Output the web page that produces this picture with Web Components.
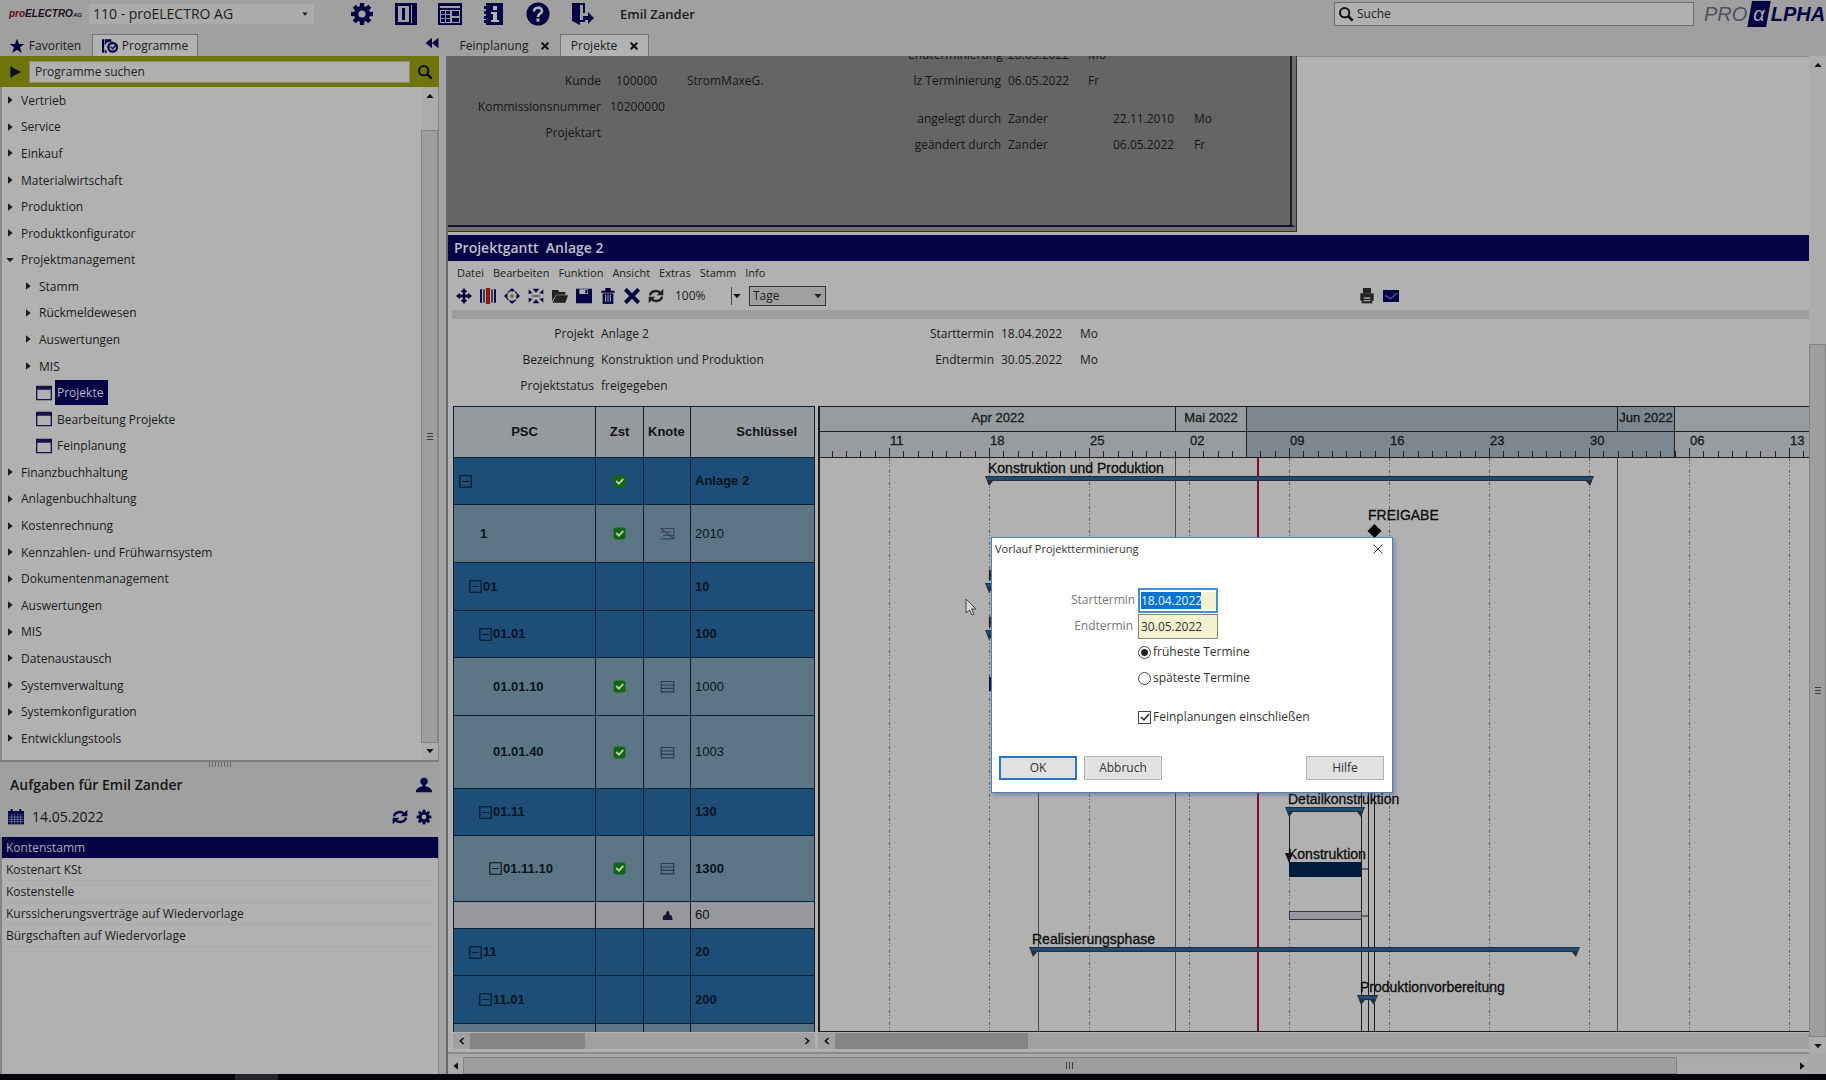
<!DOCTYPE html>
<html lang="de">
<head>
<meta charset="utf-8">
<title>proELECTRO AG – Projekte</title>
<style>
html,body{margin:0;height:100%}
body{font:12px/16px "Open Sans","Noto Sans",sans-serif;color:#1c1c1c;background:#a0a0a0;overflow:hidden}
</style>
</head>
<body>
<erp-app></erp-app>
<script>
const NAVY = '#050244';
const BASE = `*{box-sizing:border-box}button,input,select{font:inherit;color:inherit;margin:0;padding:0;border:0;background:none;border-radius:0;outline:0}button{display:flex;align-items:center;justify-content:center}a{color:inherit;text-decoration:none}`;

class Base extends HTMLElement {
  connectedCallback() {
    if (this.shadowRoot) return;
    const root = this.attachShadow({ mode: 'open' });
    const t = document.createElement('template');
    t.innerHTML = `<style>${BASE}${this.css()}</style>${this.html()}`;
    root.append(t.content.cloneNode(true));
  }
  css() { return ''; }
  html() { return '<slot></slot>'; }
}

/* ---------- icons ---------- */
const teeth = [0, 45, 90, 135].map(a => `<rect x="9.8" y="1" width="4.4" height="22" transform="rotate(${a} 12 12)"/>`).join('');
const ICONS = {
  gear: `${teeth}<circle cx="12" cy="12" r="8"/><circle cx="12" cy="12" r="3.6" fill="#a4a4a4"/>`,
  panel: `<path fill-rule="evenodd" d="M1 1h22v22H1zM4 4v16h11V4zM17 3v18h1V3z"/><path d="M8 6h3v12H8z"/>`,
  layout: `<path fill-rule="evenodd" d="M0 1h24v22H0zM2 4v2h20V4zM2 8v13h20V8z"/><path d="M3 9h9v11H3zM14 9h7v5h-7zM14 16h7v4h-7z"/><path d="M3 12.500h9M3 16.500h9M7.500 9v11" stroke="#8c8cae"/>`,
  info: `<path d="M4 1h17v22H4z"/><path d="M2 4h3v3H2zM2 9h3v3H2zM2 14h3v3H2zM2 18h3v3H2z"/><path fill="#b4b4b4" d="M11 4h4v4h-4zM9 10h6v8h2v2H9v-2h2v-6H9z"/>`,
  help: `<circle cx="12" cy="12" r="11.5"/><path d="M8 9.5c0-5 8-5 8-.6 0 3-4 2.600-4 6" fill="none" stroke="#b4b4b4" stroke-width="2.600"/><path fill="#b4b4b4" d="M10.500 16.500h3v3h-3z"/>`,
  exit: `<path d="M2 2h8v21l-8-4z"/><path d="M2 2h12v9M14 17v2H9" fill="none" stroke="currentColor" stroke-width="2"/><path d="M13 14h5v-4l6 6-6 6v-4h-5z"/>`,
  star: `<path d="M12 1l3 8h8l-6.500 5 2.500 8.500-7-5-7 5L7.500 14 1 9h8z"/>`,
  book: `<path d="M0 2h3v20H0zM4 2h10v4a8 8 0 0 0-7 14v2H4z"/><circle cx="16" cy="14" r="6.500" fill="none" stroke="currentColor" stroke-width="3.500"/><path d="M13 13l3 3 6-7" fill="none" stroke="currentColor" stroke-width="2"/>`,
  back: `<path d="M12 3v18L1 12zM23 3v18L12 12z"/>`,
  play: `<path d="M4 2l18 10L4 22z"/>`,
  search: `<circle cx="10" cy="10" r="7" fill="none" stroke="currentColor" stroke-width="3"/><path d="M15 15l7 7" stroke="currentColor" stroke-width="4"/>`,
  right: `<path d="M6 1l14 11L6 23z"/>`, left: `<path d="M18 1L4 12l14 11z"/>`,
  down: `<path d="M1 6l11 13L23 6z"/>`, up: `<path d="M1 18L12 5l11 13z"/>`,
  window: `<path fill-rule="evenodd" d="M0 1h24v22H0zM2 7v14h20V7z"/>`,
  person: `<circle cx="12" cy="6.500" r="5.500"/><path d="M10 10h4v4c5 1 10 3 10 9H0c0-6 5-8 10-9z"/>`,
  calendar: `<path d="M0 3h24v5H0zM4 0h3v4H4zM17 0h3v4h-3z"/><path d="M0 8h24v15H0z"/><path d="M5.500 9v13M10 9v13M14.500 9v13M19 9v13M1 12h22M1 15.500h22M1 19h22" stroke="#8c8cae" stroke-width="1"/>`,
  refresh: `<path d="M3 11c1-7 11-8 15-4M21 13c-1 7-11 8-15 4" fill="none" stroke="currentColor" stroke-width="3.600"/><path d="M23 1v10H13zM1 23V13h10z"/>`,
  move: `<path d="M12 0l5 6H7zM12 24l5-6H7zM0 12l6-5v10zM24 12l-6-5v10z"/><path d="M10 4h4v16h-4z"/><path d="M4 10h16v4H4z"/>`,
  bars: `<path d="M0 2h3v20H0zM21 2h3v20h-3zM5 2h2v20H5zM17 2h2v20h-2z"/><path d="M9 0h6v24H9z" fill="#8e1a12"/>`,
  expand: `<path d="M12 0l5 5H7zM12 24l5-5H7zM0 12l5-5v10zM24 12l-5-5v10z"/><circle cx="12" cy="12" r="8" fill="none" stroke="currentColor" stroke-width="2" stroke-dasharray="3 3"/><circle cx="12" cy="12" r="3" fill="#7d7d2a"/>`,
  shrink: `<path d="M7 1h10l-5 6zM7 23h10l-5-6zM1 2l6 6-6 1zM23 2l-6 6 6 1zM1 22l6-6-6-1zM23 22l-6-6 6-1z"/><path d="M6 11h12v2H6z" fill="#4b4b3a"/>`,
  folder: `<path d="M0 3h9l2 3h9v4H6L0 20z"/><path d="M6 11h18l-4 11H1z"/>`,
  save: `<path fill-rule="evenodd" d="M0 1h24v22H0zM5 2v7h13V2zM14 3h3v5h-3z"/>`,
  trash: `<path d="M2 4h20v3H2zM8 0h8v4H8z"/><path d="M4 8h16v16H4z"/><path d="M8.500 10v11M12 10v11M15.500 10v11" stroke="#a8a8bc" stroke-width="1.500"/>`,
  cross: `<path d="M2 2l20 20M22 2L2 22" stroke="currentColor" stroke-width="6"/>`,
  thin: `<path d="M3 3l18 18M21 3L3 21" stroke="currentColor" stroke-width="2"/>`,
  printer: `<path d="M6 0h12v8H6z"/><path d="M2 8h20v11H2z"/><path d="M4 13h16v10H4z"/><path d="M7 15h10M7 19h10" stroke="#a8a8a8" stroke-width="2"/>`,
  mail: `<path d="M0 3h24v18H0z"/><path d="M3 11l8 5 11-9" fill="none" stroke="#55558a" stroke-width="2"/>`,
  check: `<rect x="1" y="1" width="22" height="22" rx="5" fill="#126612"/><path d="M6 11l5 5 8-9" fill="none" stroke="#b8ccb0" stroke-width="3.600"/>`,
  lines: `<path d="M1 4h22M1 9.500h22M1 15h22M1 20.500h22M2 4v16M22 4v16" fill="none" stroke="#2c3c4c" stroke-width="1.800"/>`,
  event: `<path d="M1 4h22M1 9.500h17M5 15h17M1 20.500h22M1 4l21 16M22 4v16" fill="none" stroke="#3a4458" stroke-width="1.800"/>`,
  worker: `<path d="M12 2c5 0 4 6 4 8 4 1 7 4 7 12H2C1 14 4 11 9 10c0-3 0-8 3-8z" fill="#15153a"/>`,
  minus: `<path d="M1.500 1.500h21v21h-21zM6 12h12" fill="none" stroke="currentColor" stroke-width="2"/>`,
  chevl: `<path d="M17 3L7 12l10 9" fill="none" stroke="currentColor" stroke-width="5"/>`,
  chevr: `<path d="M7 3l10 9-10 9" fill="none" stroke="currentColor" stroke-width="5"/>`
};
customElements.define('app-icon', class extends Base {
  css() { const s = this.getAttribute('size') || 16; return `:host{display:inline-block;flex:none;width:${s}px;height:${s}px}svg{display:block;width:100%;height:100%}`; }
  html() { return `<svg viewBox="0 0 24 24" fill="currentColor" aria-hidden="true">${ICONS[this.getAttribute('name')] || ''}</svg>`; }
});

/* ---------- scroll bars ---------- */
customElements.define('scroll-bar', class extends Base {
  css() {
    const v = !this.hasAttribute('horizontal'), [a, b, c] = (this.getAttribute('parts') || '1 1 1').split(' ');
    return `:host{display:flex;flex:none;flex-direction:${v ? 'column' : 'row'};background:var(--track,#acacac);color:#151515}
    button{flex:none;width:var(--btn,17px);height:17px}
    ${v ? ':host{width:17px}' : ':host{height:17px}button{height:100%}'}
    .a{flex:${a} 0 0}.c{flex:${c} 0 0}
    .t{flex:${b} 0 0;background:var(--thumb,#9e9e9e);border:1px solid var(--edge,#838383);display:flex;align-items:center;justify-content:center}
    .g{${v ? 'width:6px;height:7px;background:repeating-linear-gradient(#3c3c3c 0 1px,transparent 1px 3px)' : 'height:7px;width:7px;background:repeating-linear-gradient(90deg,#3c3c3c 0 1px,transparent 1px 3px)'}}`;
  }
  html() {
    const v = !this.hasAttribute('horizontal'), ch = this.hasAttribute('chevron');
    const i = v ? ['up', 'down'] : ch ? ['chevl', 'chevr'] : ['left', 'right'];
    return `<button aria-label="zurück"><app-icon name="${i[0]}" size="8"></app-icon></button><div class="a"></div><div class="t">${ch ? '' : '<div class="g"></div>'}</div><div class="c"></div>${this.hasAttribute('open-end') ? '' : `<button aria-label="vor"><app-icon name="${i[1]}" size="8"></app-icon></button>`}`;
  }
});

/* ---------- header ---------- */
customElements.define('app-header', class extends Base {
  css() { return `:host{display:flex;align-items:center;height:28px;flex:none}
    .logo{width:84px;padding-left:9px;font:italic bold 10px/16px "Liberation Sans",sans-serif;color:#1c1020}.logo b{color:#5c1018}.logo small{font-size:6px}
    .client{display:flex;align-items:center;width:225px;height:20px;margin:0 36px 0 5px;padding-right:6px;background:#ababab}
    select{appearance:none;flex:1;font-size:14px;line-height:20px;height:20px;padding-left:4px}
    .tools{display:flex;gap:20px;color:${NAVY}}
    .user{font-weight:600;font-size:13px;margin-left:26px;flex:1}
    .search{display:flex;align-items:center;gap:3px;width:360px;height:24px;margin-right:10px;padding-left:3px;background:#b0b0b0;border:1px solid #6e7076;color:#111}
    .search input{flex:1;font-size:12px;color:#222}input::placeholder{color:#222;opacity:1}
    .brand{display:flex;width:122px;font:italic 20px/26px "Liberation Sans",sans-serif;color:#50505c;align-items:center}
    .brand i{background:${NAVY};color:#a9a9c0;padding:0 6px;height:26px;clip-path:polygon(20% 0,100% 0,80% 100%,0 100%)}.brand b{color:${NAVY}}`; }
  html() { return `<div class="logo"><b>pro</b>ELECTRO<small>AG</small></div>
    <div class="client"><select aria-label="Mandant"><option>110 - proELECTRO AG</option></select><app-icon name="down" size="6"></app-icon></div>
    <div class="tools">${['gear', 'panel', 'layout', 'info', 'help', 'exit'].map(n => `<button aria-label="${n}"><app-icon name="${n}" size="24"></app-icon></button>`).join('')}</div>
    <div class="user">Emil Zander</div>
    <label class="search"><app-icon name="search" size="16"></app-icon><input type="text" placeholder="Suche"></label>
    <div class="brand"><span>PRO</span><i>α</i><b>LPHA</b></div>`; }
});

customElements.define('app-tab', class extends Base {
  css() { return `:host{display:block;height:22px}button{height:22px;width:100%;padding:0 8px;gap:4px;font-size:12px;border:1px solid transparent;border-bottom:0}
    :host([active]) button{background:#b2b2b2;border-color:#747474}app-icon{color:${NAVY}}.x{color:#111;margin-left:9px}`; }
  html() { const i = this.getAttribute('icon'); return `<button role="tab">${i ? `<app-icon name="${i}" size="16"></app-icon>` : ''}<slot></slot>${this.hasAttribute('closable') ? '<app-icon class="x" name="cross" size="8"></app-icon>' : ''}</button>`; }
});

/* ---------- sidebar ---------- */
const TREE = [['Vertrieb'], ['Service'], ['Einkauf'], ['Materialwirtschaft'], ['Produktion'], ['Produktkonfigurator'], ['Projektmanagement', 'open'],
  ['Stamm', 'sub'], ['Rückmeldewesen', 'sub'], ['Auswertungen', 'sub'], ['MIS', 'sub'], ['Projekte', 'leaf sel'], ['Bearbeitung Projekte', 'leaf'], ['Feinplanung', 'leaf'],
  ['Finanzbuchhaltung'], ['Anlagenbuchhaltung'], ['Kostenrechnung'], ['Kennzahlen- und Frühwarnsystem'], ['Dokumentenmanagement'], ['Auswertungen'], ['MIS'],
  ['Datenaustausch'], ['Systemverwaltung'], ['Systemkonfiguration'], ['Entwicklungstools']];
customElements.define('program-tree', class extends Base {
  css() { return `:host{display:flex;min-height:0;background:#b1b1b1;border-left:2px solid #8a8a8a;border-right:1px solid #8a8a8a}
    ul{flex:1;display:flex;flex-direction:column;list-style:none;margin:0;padding:0 0 8px 4px}
    li{flex:1;display:flex;align-items:center}a{display:flex;align-items:center;gap:7px}
    .sub a{padding-left:18px}.leaf a{padding-left:30px;gap:3px}.leaf app-icon{color:#15134a}
    span{line-height:25px}.leaf span{padding:0 5px 0 2px}.sel span{background:${NAVY};color:#b4b4c4}
    scroll-bar{width:17px}`; }
  html() { return `<ul>${TREE.map(([t, k = '']) => `<li class="${k}"><a href="#"><app-icon name="${k.includes('leaf') ? 'window' : k === 'open' ? 'down' : 'right'}" size="${k.includes('leaf') ? 16 : 8}"></app-icon><span>${t}</span></a></li>`).join('')}</ul>
    <scroll-bar parts="26 614 0"></scroll-bar>`; }
});
customElements.define('task-panel', class extends Base {
  css() { return `:host{display:flex;flex-direction:column;border-top:2px solid #7c7c7c}
    .grip{width:22px;height:5px;margin:0 auto;background:repeating-linear-gradient(90deg,#666 0 1px,transparent 1px 3px)}
    .h{display:flex;align-items:center;padding:0 7px 0 10px;height:28px;font-size:14px;font-weight:600;color:#161616;margin-top:4px}
    .d{font-weight:500;height:36px;padding-left:8px;gap:8px;margin:0 0 2px}.s{flex:1}app-icon{color:${NAVY}}
    ul{flex:1;list-style:none;margin:0;padding:0;background:#b1b1b1;border:1px solid #858585;border-width:0 1px 0 2px}
    li{height:22px;line-height:22px;padding-left:4px;border-bottom:1px solid #aaa}li.sel{background:${NAVY};color:#a8a8b8}a{display:block}`; }
  html() { return `<div class="grip"></div><div class="h"><span class="s">Aufgaben für Emil Zander</span><app-icon name="person"></app-icon></div>
    <div class="h d"><app-icon name="calendar"></app-icon><span class="s">14.05.2022</span><button aria-label="Aktualisieren"><app-icon name="refresh"></app-icon></button><button aria-label="Einstellungen"><app-icon name="gear"></app-icon></button></div>
    <ul>${['Kontenstamm', 'Kostenart KSt', 'Kostenstelle', 'Kurssicherungsverträge auf Wiedervorlage', 'Bürgschaften auf Wiedervorlage'].map((t, i) => `<li${i ? '' : ' class="sel"'}><a href="#">${t}</a></li>`).join('')}</ul>`; }
});
customElements.define('app-sidebar', class extends Base {
  css() { return `:host{display:flex;flex-direction:column;width:439px;flex:none}
    .q{display:flex;align-items:center;height:31px;flex:none;background:#6d750c;padding:0 6px 0 8px;gap:7px;color:#0c0c2c}
    input{flex:1;height:22px;background:#b0b0b0;padding:0 5px;border:1px solid #8c8c70;color:#222}input::placeholder{color:#222;opacity:1}
    program-tree{flex:674 0 0}task-panel{flex:313 0 0}`; }
  html() { return `<div class="q"><app-icon name="play" size="14"></app-icon><input type="text" aria-label="Programme suchen" placeholder="Programme suchen"><button aria-label="Suchen"><app-icon name="search"></app-icon></button></div>
    <program-tree></program-tree><task-panel></task-panel>`; }
});

/* ---------- project form above the Gantt window ---------- */
customElements.define('project-head', class extends Base {
  css() { return `:host{display:flex;height:176px;flex:none}
    .pane{width:849px;overflow:hidden;background:#656565;color:#161616;border-bottom:1px solid #333;border-right:1px solid #333;display:flex;flex-direction:column}
    .in{flex:1;display:flex;border-right:4px solid #6c6c68;border-bottom:2px solid #101034;box-shadow:inset -2px 0 #202024}.foot{height:4px;background:#70706c}
    .g{display:grid;align-content:start;column-gap:7px;white-space:nowrap}.g span:nth-child(4n+1){text-align:right}
    .l{grid-template-columns:153px 60px 1fr 1px;grid-auto-rows:26px;width:460px;padding-top:17px}
    .l .n{padding-left:8px}.l .o{padding-left:2px}.l .p{padding-left:12px}
    .r{grid-template-columns:93px 73px 1fr 1px;grid-auto-rows:26px}
    .wide{grid-template-columns:93px 98px 74px 50px;margin-top:12px}.c{margin-top:-9px}
    .rest{flex:1;background:#b1b1b1;border-top:1px solid #8a8a8a}`; }
  html() { return `<div class="pane"><div class="in">
    <div class="g l"><span>Kunde</span><span class="n">100000</span><span class="p">StromMaxeG.</span><span></span><span>Kommissionsnummer</span><span class="o">10200000</span><span></span><span></span><span>Projektart</span></div>
    <div class="c"><div class="g r"><span>Endterminierung</span><span>28.05.2022</span><span>Mo</span><span></span><span>lz Terminierung</span><span>06.05.2022</span><span>Fr</span><span></span></div>
    <div class="g r wide"><span>angelegt durch</span><span>Zander</span><span>22.11.2010</span><span>Mo</span><span>geändert durch</span><span>Zander</span><span>06.05.2022</span><span>Fr</span></div></div>
    </div><div class="foot"></div></div><div class="rest"></div>`; }
});

/* ---------- Gantt table ---------- */
const ROWS = [
  { h: 47, k: 'b', lv: 0, box: 1, psc: '', ok: 1, key: 'Anlage 2' }, { h: 58, k: 'l', lv: 1, psc: '1', ok: 1, ic: 'event', key: '2010', thin: 1 },
  { h: 48, k: 'b', lv: 1, box: 1, psc: '01', key: '10' }, { h: 47, k: 'b', lv: 2, box: 1, psc: '01.01', key: '100' },
  { h: 58, k: 'l', lv: 2, psc: '01.01.10', ok: 1, ic: 'lines', key: '1000', thin: 1 }, { h: 73, k: 'l', lv: 2, psc: '01.01.40', ok: 1, ic: 'lines', key: '1003', thin: 1 },
  { h: 47, k: 'b', lv: 2, box: 1, psc: '01.11', key: '130' }, { h: 66, k: 'l', lv: 3, box: 1, psc: '01.11.10', ok: 1, ic: 'lines', key: '1300' },
  { h: 27, k: 'w', lv: 0, psc: '', ic: 'worker', key: '60', thin: 1 }, { h: 47, k: 'b', lv: 1, box: 1, psc: '11', key: '20' },
  { h: 48, k: 'b', lv: 2, box: 1, psc: '11.01', key: '200' }, { h: 9, k: 'l', lv: 0, psc: '', key: '' }];
customElements.define('gantt-table', class extends Base {
  css() { return `:host{display:block}
    table{border-collapse:collapse;table-layout:fixed;width:100%;font:bold 13px/16px "Liberation Sans",sans-serif;color:#08131f}
    th,td{border:1px solid #0a1f33;padding:0;overflow:hidden;white-space:nowrap}
    th{background:#979b9f;color:#111;height:51px;text-align:center;padding:0}th:last-child{text-align:right;padding-right:17px}th:nth-child(3){text-align:left;padding-left:4px}
    td div{display:flex;align-items:center;gap:1px}.i div{justify-content:center}
    .b td{background:#1d4e78}.l td{background:#5d7686}.w td{background:#97979c}
    td:last-child{padding-left:4px}.thin td:last-child{font-weight:normal}`; }
  html() { return `<table><colgroup><col style="width:142px"><col style="width:48px"><col style="width:47px"><col></colgroup>
    <thead><tr><th>PSC</th><th>Zst</th><th>Knote</th><th>Schlüssel</th></tr></thead><tbody>
    ${ROWS.map(r => `<tr class="${r.k}${r.thin ? ' thin' : ''}" style="height:${r.h}px"><td><div style="padding-left:${r.box ? 5 + 10 * r.lv : 13 + 13 * r.lv}px">${r.box ? '<app-icon name="minus" size="13"></app-icon>' : ''}${r.psc}</div></td>
    <td class="i"><div>${r.ok ? '<app-icon name="check" size="13"></app-icon>' : ''}</div></td><td class="i"><div>${r.ic ? `<app-icon name="${r.ic}" size="${r.ic === 'worker' ? 11 : 15}"></app-icon>` : ''}</div></td><td>${r.key}</td></tr>`).join('')}
    </tbody></table>`; }
});

/* ---------- Gantt chart: a time scale with bars, 100px per week ---------- */
customElements.define('gantt-chart', class extends Base {
  css() { return `:host{display:block;min-width:0;overflow:hidden;border:1px solid #1c1c1c;border-width:1px 0 1px 2px;background:#b1b1b1}
    svg{display:block;width:100%;height:100%;margin-left:1px;overflow:visible}text{font-family:"Liberation Sans",sans-serif;fill:#0c0c0c}
    .h{font-size:13px;fill:#15181c;stroke:#15181c;stroke-width:.3}.t{font-size:14px;stroke:#0c0c0c;stroke-width:.3}`; }
  html() {
    const W = 1600, day = 100 / 7, x0 = 68, H = 51;
    let s = `<rect x="-2" width="${W}" height="${H}" fill="#989c9f"/><rect x="425" width="428" height="${H}" fill="#7d878f"/>`;
    s += `<path d="M-2 24.500H${W}M-2 ${H - .5}H${W}M425.500 0V${H}M853.500 0V${H}M354.500 0V24M796.500 0V24" stroke="#1c2024"/>`;
    for (let d = -4; d < 105; d++) {
      const x = Math.round(x0 + d * day) + .5, mon = ((d % 7) + 7) % 7 === 0;
      s += `<path d="M${x} ${mon ? 41 : 44}V${H}" stroke="#222"/>`;
      if (mon) s += `<path d="M${x} ${H}V700" stroke="#5a5a5a" stroke-dasharray="3 2 1 2 1 3"/>`;
    }
    ['11', '18', '25', '02', '09', '16', '23', '30', '06', '13'].forEach((t, i) => s += `<text class="h" x="${x0 + 1 + i * 100}" y="38">${t}</text>`);
    s += `<text class="h" x="177" y="15" text-anchor="middle">Apr 2022</text><text class="h" x="390" y="15" text-anchor="middle">Mai 2022</text><text class="h" x="825" y="15" text-anchor="middle">Jun 2022</text>`;
    s += `<path d="M354.500 ${H}V700M796.500 ${H}V700M217.500 300V700" stroke="#484848"/>`;
    s += `<path d="M540.500 386V700M547.500 386V700M553.500 130V700M468.500 405V460M540.500 462H547.500M540.500 509H547.500" stroke="#1c1c1c" fill="none"/>`;
    s += `<path d="M437 ${H}V700" stroke="#840c22" stroke-width="2"/>`;
    const bar = (a, b, y, label) => {
      s += `<path d="M${a - 4} ${y}H${b + 4}L${b} ${y + 10}L${b - 4} ${y + 5}H${a + 4}L${a} ${y + 10}Z" fill="#23303c"/><path d="M${a - 2} ${y + 1}H${b + 2}V${y + 4}H${a - 2}Z" fill="#1f4d72"/>`;
      if (label) s += `<text class="t" x="${a - 1}" y="${y - 3}">${label}</text>`;
    };
    bar(168, 769, 69, 'Konstruktion und Produktion');
    bar(168, 260, 176, 'Konzeptphase'); bar(168, 260, 223, 'Konzept');
    s += `<rect x="168" y="270" width="60" height="14" fill="#06183a"/>`;
    s += `<text class="t" x="547" y="113">FREIGABE</text><path d="M553.500 117l7 7-7 7-7-7z" fill="#000"/>`;
    bar(468, 540, 400, 'Detailkonstruktion');
    s += `<text class="t" x="467" y="452">Konstruktion</text><path d="M464 446h8l-4 10z" fill="#111"/><rect x="468" y="455" width="72" height="15" fill="#031b3f"/>`;
    s += `<rect x="468.500" y="504.500" width="72" height="8" fill="#98989f" stroke="#3a3a40"/>`;
    bar(212, 755, 540, 'Realisierungsphase'); bar(540, 553, 588, 'Produktionvorbereitung');
    return `<svg role="img" aria-label="Projektgantt">${s}</svg>`;
  }
});

/* ---------- Gantt window ---------- */
customElements.define('gantt-window', class extends Base {
  css() { return `:host{display:flex;flex-direction:column;flex:1;min-height:0;background:#b1b1b1}
    h1{margin:3px 0 0;height:26px;flex:none;background:${NAVY};color:#c0c0cc;font-size:14px;line-height:26px;font-weight:600;padding-left:6px;white-space:pre}
    nav{display:flex;gap:9px;height:25px;padding-left:9px;font-size:11px;color:#222}nav button{height:24px}
    .bar{display:flex;align-items:center;height:20px;padding-left:8px;gap:8px;color:${NAVY}}
    .zoom{width:66px;margin-left:3px;color:#222;display:flex;align-items:center;justify-content:space-between}.zoom input{width:54px}
    .drop{border-left:1px solid #444;width:10px;height:18px;display:flex;align-items:center;justify-content:end;color:#111}
    .sel{display:flex;align-items:center;width:77px;height:20px;border:1px solid #333;background:#a0a0a0;color:#222;padding-right:3px}select{appearance:none;flex:1;padding-left:3px}
    .s{flex:0 1 517px}.dim{color:#222}
    .strip{height:9px;margin:4px 0 0 4px;background:#9d9d9d;flex:none}
    .form{display:grid;grid-template-columns:146px 245px 155px 86px 1fr;grid-auto-rows:26px;height:87px;flex:none;padding-top:7px}
    .form span:nth-child(5n+2),.form span:nth-child(5n+4){padding-left:7px}.form span:nth-child(5n+1),.form span:nth-child(5n+3){text-align:right}
    .form span{white-space:nowrap}
    .work{flex:1;min-height:0;display:grid;grid-template-columns:362px minmax(0,1fr);grid-template-rows:626px 1fr;column-gap:3px;padding-left:5px}
    gantt-table{overflow:hidden}
    scroll-bar{--thumb:#858585;--edge:#858585;--track:#a0a0a0;height:16px;margin-top:1px;color:#111}`; }
  html() { return `<h1>Projektgantt  Anlage 2</h1>
    <nav>${['Datei', 'Bearbeiten', 'Funktion', 'Ansicht', 'Extras', 'Stamm', 'Info'].map(m => `<button>${m}</button>`).join('')}</nav>
    <div class="bar">${['move', 'bars', 'expand', 'shrink', 'folder', 'save', 'trash', 'cross', 'refresh'].map(n => `<button aria-label="${n}"${n === 'folder' || n === 'refresh' ? ' class="dim"' : ''}><app-icon name="${n}"></app-icon></button>`).join('')}
      <div class="zoom"><input type="text" aria-label="Zoom" value="100%"><span class="drop"><app-icon name="down" size="8"></app-icon></span></div>
      <div class="sel"><select aria-label="Zeiteinheit"><option>Tage</option></select><app-icon name="down" size="8"></app-icon></div><div class="s"></div>
      <button aria-label="Drucken" class="dim"><app-icon name="printer"></app-icon></button><button aria-label="E-Mail"><app-icon name="mail"></app-icon></button></div>
    <div class="strip"></div>
    <div class="form"><span>Projekt</span><span>Anlage 2</span><span>Starttermin</span><span>18.04.2022</span><span>Mo</span>
      <span>Bezeichnung</span><span>Konstruktion und Produktion</span><span>Endtermin</span><span>30.05.2022</span><span>Mo</span>
      <span>Projektstatus</span><span>freigegeben</span></div>
    <div class="work"><gantt-table></gantt-table><gantt-chart></gantt-chart>
      <scroll-bar horizontal chevron parts="0 114 214"></scroll-bar><scroll-bar horizontal chevron open-end parts="0 191 782"></scroll-bar></div>`; }
});

/* ---------- dialog ---------- */
customElements.define('schedule-dialog', class extends Base {
  css() { return `:host{display:flex;flex-direction:column;width:402px;height:256px;background:#fff;border:1px solid #4f7fb4;box-shadow:2px 2px 4px rgba(60,90,140,.45);color:#333}
    header{display:flex;justify-content:space-between;height:24px;padding:3px 8px 0 3px;font-size:11px}
    header button{width:12px;height:16px}
    form{flex:1;display:flex;flex-direction:column;padding:25px 0 0 146px}
    .f{display:flex;align-items:center;height:26px;margin-left:-67px}.f label{width:62px;text-align:right;color:#777}
    .f input{width:80px;height:25px;margin-left:5px;border:1px solid #7d8a7a;background:#f3f1cf;padding-left:2px}
    .f input.cur{border:2px solid #4a90d9;background:linear-gradient(90deg,#0a74d0 61px,#f3f1cf 61px);background-clip:content-box;background-color:#f3f1cf;color:#e8f2ff;padding:2px 0 2px 1px}
    .o{display:flex;align-items:center;gap:2px;height:26px}
    .o input{appearance:none;width:13px;height:13px;border:1px solid #444;background:#fff}.o input[type=radio]{border-radius:50%}
    .o input[type=radio]:checked{background:radial-gradient(circle,#222 0 3px,transparent 4px)}
    .k{margin-top:13px}.c{position:relative;display:flex}.c svg{position:absolute;left:0;top:0}
    footer{display:flex;gap:7px;padding:0 8px 12px 7px}footer button{width:78px;height:24px;background:#e1e1e1;border:1px solid #b4b4b4}
    footer .d{border:2px solid #2878c8}footer .e{margin-left:auto}`; }
  html() { return `<header><span>Vorlauf Projektterminierung</span><button aria-label="Schließen"><app-icon name="thin" size="12"></app-icon></button></header>
    <form><div class="f"><label for="a">Starttermin</label><input id="a" class="cur" type="text" value="18.04.2022"></div>
    <div class="f"><label for="b">Endtermin</label><input id="b" type="text" value="30.05.2022"></div>
    <label class="o"><input type="radio" name="t" checked>früheste Termine</label><label class="o"><input type="radio" name="t">späteste Termine</label>
    <label class="o k"><span class="c"><input type="checkbox" checked><svg width="13" height="13" viewBox="0 0 13 13"><path d="M3 6l3 3 5-6" fill="none" stroke="#222" stroke-width="1.500"/></svg></span>Feinplanungen einschließen</label></form>
    <footer><button class="d">OK</button><button>Abbruch</button><button class="e">Hilfe</button></footer>`; }
});

/* ---------- whole page ---------- */
customElements.define('erp-app', class extends Base {
  css() { return `:host{display:flex;flex-direction:column;height:100vh;position:relative;overflow:hidden}
    .tabs{display:flex;height:28px;flex:none;align-items:end}
    .lt{display:flex;width:448px;align-items:end}.lt .s{flex:1}.lt button{color:${NAVY};height:26px;margin-right:9px}
    .lt app-tab:first-child{width:90px}.lt app-tab+app-tab{width:106px;margin-left:2px}
    .mt{display:flex;padding-left:1px}.mt app-tab:first-child{width:111px}.mt app-tab+app-tab{width:89px}
    .body{flex:1;display:flex;min-height:0}
    .split{width:9px;flex:none;border-right:2px solid #666;background:#a2a2a2}
    .main{flex:1;min-width:0;display:grid;grid-template-columns:minmax(0,1fr) 17px;grid-template-rows:minmax(0,1fr) 20px;background:#a8a8a8}
    .col{display:flex;flex-direction:column;min-height:0;border-bottom:2px solid #8c8c8c}
    .hb{height:17px;margin-top:3px;--btn:15px}
    .task{height:6px;flex:none;background:#04060a;padding-left:235px}.task i{display:block;width:43px;height:6px;background:#24262a}
    schedule-dialog{position:absolute;left:991px;top:537px}
    .cursor{position:absolute;left:965px;top:598px}`; }
  html() { return `<app-header></app-header>
    <div class="tabs"><div class="lt"><app-tab icon="star">Favoriten</app-tab><app-tab icon="book" active>Programme</app-tab><span class="s"></span><button aria-label="Einklappen"><app-icon name="back" size="14"></app-icon></button></div>
      <div class="mt"><app-tab closable>Feinplanung</app-tab><app-tab closable active>Projekte</app-tab></div></div>
    <div class="body"><app-sidebar></app-sidebar><div class="split"></div>
      <div class="main"><div class="col"><project-head></project-head><gantt-window></gantt-window></div><scroll-bar parts="272 695 0"></scroll-bar>
      <scroll-bar class="hb" horizontal parts="0 1210 117"></scroll-bar></div></div>
    <div class="task"><i></i></div>
    <schedule-dialog></schedule-dialog>
    <svg class="cursor" width="12" height="19" viewBox="0 0 12 19"><path d="M1 1v14l3.500-3 2.500 5 2-1-2.500-5H11z" fill="#d8d8d8" stroke="#444"/></svg>`; }
});
</script>
</body>
</html>
